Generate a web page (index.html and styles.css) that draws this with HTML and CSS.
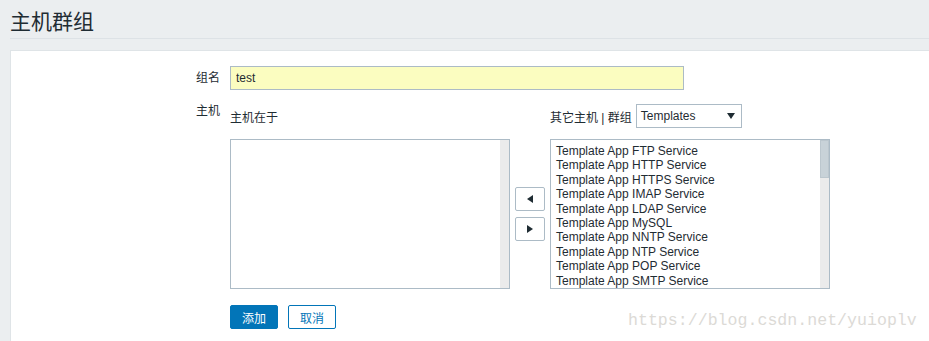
FILE: index.html
```html
<!DOCTYPE html>
<html>
<head>
    <title>主机群组</title>
    <meta charset="utf-8">
    <link rel="stylesheet" href="styles.css">
</head>
<body>
    <div class="header">
        <h1>主机群组</h1>
    </div>

    <div class="content">
        <form class="form">
            <label class="form-label">组名</label>
            <div class="form-field">
                <input class="text-input" type="text" value="test">
            </div>

            <label class="form-label label-top">主机</label>
            <div class="form-field">
                <div class="tween">
                    <div class="tween-head">主机在于</div>
                    <div></div>
                    <div class="tween-head">
                        <span>其它主机 | 群组</span>
                        <div class="select">
                            <span>Templates</span>
                            <svg width="8" height="6" viewBox="0 0 8 6"><path d="M0 0 H8 L4 6 Z" fill="#1f2c33"/></svg>
                        </div>
                    </div>

                    <div class="list">
                        <div class="list-items"></div>
                        <div class="scrollbar"></div>
                    </div>
                    <div class="tween-buttons">
                        <button type="button" class="arrow-btn">
                            <svg width="6" height="8" viewBox="0 0 6 8"><path d="M6 0 V8 L0 4 Z" fill="#1f2c33"/></svg>
                        </button>
                        <button type="button" class="arrow-btn">
                            <svg width="6" height="8" viewBox="0 0 6 8"><path d="M0 0 V8 L6 4 Z" fill="#1f2c33"/></svg>
                        </button>
                    </div>
                    <div class="list">
                        <div class="list-items">
                            <div class="list-item">Template App FTP Service</div>
                            <div class="list-item">Template App HTTP Service</div>
                            <div class="list-item">Template App HTTPS Service</div>
                            <div class="list-item">Template App IMAP Service</div>
                            <div class="list-item">Template App LDAP Service</div>
                            <div class="list-item">Template App MySQL</div>
                            <div class="list-item">Template App NNTP Service</div>
                            <div class="list-item">Template App NTP Service</div>
                            <div class="list-item">Template App POP Service</div>
                            <div class="list-item">Template App SMTP Service</div>
                        </div>
                        <div class="scrollbar">
                            <div class="scrollbar-thumb" style="height: 26%"></div>
                        </div>
                    </div>
                </div>
            </div>

            <div></div>
            <div class="form-actions">
                <button type="button" class="btn-primary">添加</button>
                <button type="button" class="btn-alt">取消</button>
            </div>
        </form>
    </div>

    <div class="watermark">https://blog.csdn.net/yuioplv</div>
</body>
</html>
```

FILE: styles.css
```css
body { margin: 0; padding: 0 0 0 10px; background-color: #ebeef0; color: #1f2c33; font-family: "Liberation Sans", Arial, "Noto Sans CJK SC", sans-serif; font-size: 12px; overflow: hidden; }
.header { height: 38px; border-bottom: 1px solid #dde2e6; }
.header h1 { margin: 0; font-size: 21px; font-weight: normal; line-height: 40px; font-family: "Noto Sans CJK SC", sans-serif; }
.content { margin-top: 11px; height: calc(100vh - 50px); box-sizing: border-box; background-color: white; border: 1px solid #dfe4e7; border-right: none; border-bottom: none; }
.form { display: grid; grid-template-columns: 209px auto; column-gap: 10px; row-gap: 14px; padding-top: 15px; }
.form-label { text-align: right; line-height: 24px; white-space: nowrap; }
.label-top { line-height: 14px; }
.text-input { width: 454px; height: 24px; box-sizing: border-box; margin: 0; padding: 0 5px; border: 1px solid #acbbc6; background-color: #fbfdc0; color: #1f2c33; font-family: inherit; font-size: 12px; outline: none; }
.tween { display: grid; grid-template-columns: 280px 40px 280px; grid-template-rows: 24px 150px; row-gap: 11px; }
.tween-head { display: flex; align-items: center; gap: 4px; white-space: nowrap; }
.select { display: flex; align-items: center; justify-content: space-between; width: 106px; height: 24px; box-sizing: border-box; padding: 0 6px 0 4px; border: 1px solid #acbbc6; background-color: white; }
.list { display: flex; box-sizing: border-box; height: 150px; border: 1px solid #acbbc6; background-color: white; overflow: hidden; }
.list-items { flex: 1; padding: 4px 0 0 5px; line-height: 14.4px; }
.list-item { white-space: nowrap; }
.scrollbar { width: 9px; background-color: #ebebeb; }
.scrollbar-thumb { box-sizing: border-box; background-color: #c8d2d8; border: 1px solid #bcc7ce; }
.tween-buttons { display: flex; flex-direction: column; justify-content: center; align-items: center; gap: 6px; }
.arrow-btn { display: flex; align-items: center; justify-content: center; width: 30px; height: 24px; padding: 0; border: 1px solid #acbbc6; border-radius: 2px; background-color: white; }
.form-actions { display: flex; gap: 10px; margin-top: 2px; }
.btn-primary, .btn-alt { width: 48px; height: 24px; padding: 0; border: 1px solid #0275b8; border-radius: 2px; font-family: inherit; font-size: 12px; }
.btn-primary { background-color: #0275b8; color: white; }
.btn-alt { background-color: white; color: #0275b8; }
.watermark { position: absolute; left: 628px; top: 311px; font-family: "Liberation Mono", monospace; font-size: 16.6px; color: #dcdad6; white-space: nowrap; }
```
